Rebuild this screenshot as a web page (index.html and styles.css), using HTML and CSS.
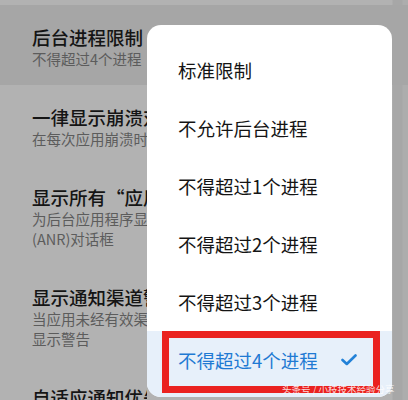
FILE: index.html
```html
<!DOCTYPE html>
<html lang="zh-CN">
<head>
<meta charset="utf-8">
<link rel="stylesheet" href="styles.css">
</head>
<body>
<div class="screen">
  <ul class="settings">
    <li class="setting pressed">
      <div class="title">后台进程限制</div>
      <div class="sub">不得超过4个进程</div>
    </li>
    <li class="setting">
      <div class="title">一律显示崩溃对话框</div>
      <div class="sub">在每次应用崩溃时显示对话框</div>
    </li>
    <li class="setting">
      <div class="title">显示所有“应用程序无响应”</div>
      <div class="sub">为后台应用程序显示“应用程序无响应”<br>(ANR)对话框</div>
    </li>
    <li class="setting">
      <div class="title">显示通知渠道警告</div>
      <div class="sub">当应用未经有效渠道发布通知时，在屏幕上<br>显示警告</div>
    </li>
    <li class="setting">
      <div class="title">自适应通知优先级</div>
    </li>
  </ul>

  <div class="menu">
    <div class="option">标准限制</div>
    <div class="option">不允许后台进程</div>
    <div class="option">不得超过1个进程</div>
    <div class="option">不得超过2个进程</div>
    <div class="option">不得超过3个进程</div>
    <div class="option selected">
      <span>不得超过4个进程</span>
      <svg class="check" width="16" height="12" viewBox="0 0 16 12"><path d="M1.5 6 L5.8 10 L14.5 1.5" fill="none" stroke="#2382d8" stroke-width="2.6" stroke-linecap="round" stroke-linejoin="round"/></svg>
    </div>
    <div class="highlight"></div>
  </div>

  <div class="watermark">头条号 / 小枝技术经验分享</div>
</div>
</body>
</html>
```

FILE: styles.css
```css
html, body {
  margin: 0;
  padding: 0;
}
body {
  width: 408px;
  height: 400px;
  overflow: hidden;
  background: #b2b2b2;
  font-family: "Noto Sans CJK SC", "Noto Sans", sans-serif;
}
.screen {
  position: relative;
  width: 408px;
  height: 400px;
  overflow: hidden;
  padding-top: 5px;
  box-sizing: border-box;
  background: linear-gradient(to right, #b2b2b2 0, #b2b2b2 392px, #a7a7a7 393px, #a7a7a7 402px, #adadad 403px);
}
.settings {
  list-style: none;
  margin: 0;
  padding: 0;
}
.setting {
  padding: 20px 0 16px 32px;
  white-space: nowrap;
}
.setting.pressed {
  background: #a6a6a6;
}
.title,
.sub {
  width: 115px;
  overflow: hidden;
}
.title {
  font-size: 18.5px;
  line-height: 24px;
  font-weight: 500;
  color: #151515;
}
.sub {
  font-size: 14.5px;
  line-height: 20px;
  color: #5c5c5c;
}
.menu {
  position: absolute;
  left: 147px;
  top: 25px;
  width: 245px;
  height: 372px;
  background: #ffffff;
  border-radius: 14px;
  padding-top: 16px;
  box-sizing: border-box;
  overflow: hidden;
}
.option {
  height: 58px;
  display: flex;
  align-items: center;
  justify-content: space-between;
  padding: 0 35px 0 31px;
  font-size: 18.5px;
  color: #141414;
  white-space: nowrap;
}
.option.selected {
  height: 66px;
  padding-bottom: 8px;
  box-sizing: border-box;
  background: #e7f0fa;
  color: #1f7ad3;
}
.check {
  display: block;
}
.highlight {
  position: absolute;
  left: 15px;
  top: 306px;
  width: 218px;
  height: 62px;
  box-sizing: border-box;
  border: 7px solid #ea2220;
}
.watermark {
  position: absolute;
  left: 282px;
  top: 383px;
  font-size: 9.5px;
  line-height: 12px;
  color: rgba(255, 255, 255, 0.85);
  white-space: nowrap;
}
```
